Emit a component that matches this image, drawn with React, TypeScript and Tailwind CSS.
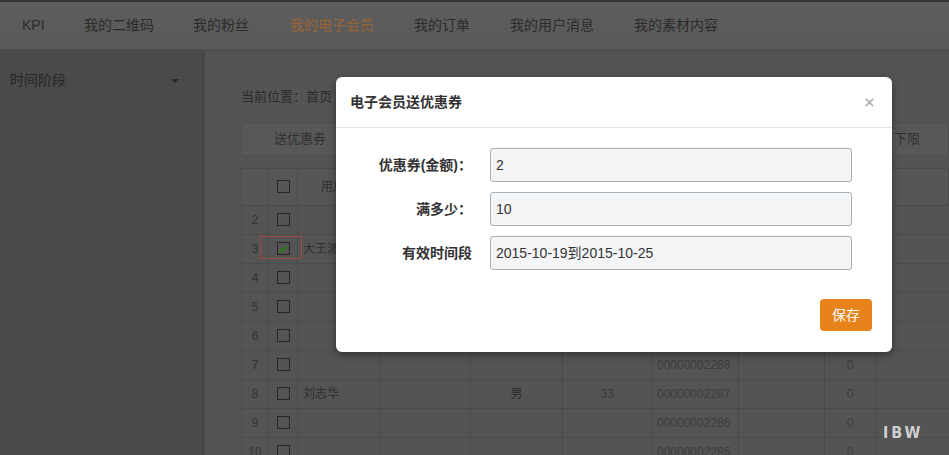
import { X } from 'lucide-react'

const NAV = ['KPI', '我的二维码', '我的粉丝', '我的电子会员', '我的订单', '我的用户消息', '我的素材内容']
const NAV_X = ['w-[62px]', 'w-[109px]', 'w-[97px]', 'w-[124px]', 'w-[96px]', 'w-[124px]', 'w-[120px]']

const COLS = ['w-[27px]', 'w-[29px]', 'w-[83px]', 'w-[90px]', 'w-[92px]', 'w-[90px]', 'w-[86px]', 'w-[86px]', 'w-[51px]', 'flex-1']

interface Row {
  no: number
  name: string
  sex: string
  age: string
  id: string
  count: string
  checked?: boolean
}

const ROWS: Row[] = [
  { no: 2, name: '', sex: '', age: '', id: '00000002292', count: '0' },
  { no: 3, name: '大王派', sex: '', age: '', id: '00000002291', count: '0', checked: true },
  { no: 4, name: '', sex: '', age: '', id: '00000002290', count: '0' },
  { no: 5, name: '', sex: '', age: '', id: '00000002290', count: '0' },
  { no: 6, name: '', sex: '', age: '', id: '00000002289', count: '0' },
  { no: 7, name: '', sex: '', age: '', id: '00000002288', count: '0' },
  { no: 8, name: '刘志华', sex: '男', age: '33', id: '00000002287', count: '0' },
  { no: 9, name: '', sex: '', age: '', id: '00000002286', count: '0' },
  { no: 10, name: '', sex: '', age: '', id: '00000002285', count: '0' },
]

function Box({ checked }: { checked?: boolean }) {
  return (
    <span className="flex h-[13px] w-[13px] items-center justify-center border border-[#262626]">
      {checked && (
        <svg viewBox="0 0 10 10" className="h-[10px] w-[10px]">
          <path d="M1.5 4.8 L4 7.5 L8.5 2.2" fill="none" stroke="#2f7a1c" strokeWidth="2.4" />
        </svg>
      )}
    </span>
  )
}

function Field({ label, value }: { label: string; value: string }) {
  return (
    <div className="flex items-center">
      <label className="w-[138px] pr-[2px] text-right text-[14px] font-bold text-[#333]">{label}</label>
      <div className="ml-[16px] flex h-[34px] w-[362px] items-center rounded-[3px] border border-[#a9b0b6] bg-[#f3f5f7] px-[5px] text-[14px] text-[#333]">
        {value}
      </div>
    </div>
  )
}

export default function App() {
  return (
    <div
      className="relative h-[455px] w-[949px] overflow-hidden bg-[#545454]"
      style={{ fontFamily: '"Liberation Sans", "Noto Sans CJK SC", sans-serif' }}
    >
      {/* top nav */}
      <div className="flex h-[52px] items-center border-t-2 border-b-[3px] border-t-[#333] border-b-[#4e4e4e] bg-gradient-to-b from-[#5e5e5e] to-[#595959] pl-[22px] text-[14px] text-[#2b2b2b]">
        {NAV.map((n, i) => (
          <div key={n} className={`${NAV_X[i]} shrink-0 ${i === 3 ? 'text-[#9a6535]' : ''}`}>
            {n}
          </div>
        ))}
      </div>

      <div className="flex h-[403px]">
        {/* sidebar */}
        <div className="w-[205px] shrink-0 border-r-[3px] border-[#474747] bg-[#4a4a4a]">
          <div className="flex items-center justify-between px-[10px] pt-[18px] text-[14px] text-[#262626]">
            <span>时间阶段</span>
            <span className="mr-[13px] h-0 w-0 border-x-[4px] border-t-[4px] border-x-transparent border-t-[#2a2a2a]" />
          </div>
        </div>

        {/* content */}
        <div className="flex-1 pl-[36px] pt-[35px]">
          <div className="text-[13px] text-[#2b2b2b]">当前位置：首页 &gt; 我的电子会员</div>

          <div className="mt-[16px] flex h-[33px] items-center justify-between border border-[#4f4f4f] bg-[#585858] pl-[32px] pr-[28px] text-[13px] text-[#303030]">
            <span>送优惠券</span>
            <span>下限</span>
          </div>

          <div className="mt-[12px] border-l border-t border-[#4b4b4b] text-[12px] text-[#2b2b2b]">
            <div className="flex h-[37px] border-b border-[#4b4b4b] bg-[#565656]">
              {COLS.map((c, i) => (
                <div key={i} className={`${c} flex shrink-0 items-center justify-center border-r border-[#4b4b4b]`}>
                  {i === 1 && <Box />}
                  {i === 2 && <span className="text-[#2e2e2e]">用户名</span>}
                </div>
              ))}
            </div>
            {ROWS.map((r) => (
              <div key={r.no} className="flex h-[29px] border-b border-[#4b4b4b]">
                <div className={`${COLS[0]} flex shrink-0 items-center justify-center border-r border-[#4b4b4b] text-[#333]`}>{r.no}</div>
                <div className={`${COLS[1]} relative flex shrink-0 items-center justify-center border-r border-[#4b4b4b]`}>
                  <Box checked={r.checked} />
                  {r.checked && <span className="absolute left-[-9px] top-[1px] h-[23px] w-[42px] border border-[#a04848]" />}
                </div>
                <div className={`${COLS[2]} flex shrink-0 items-center border-r border-[#4b4b4b] pl-[5px] text-[#2e2e2e]`}>{r.name}</div>
                <div className={`${COLS[3]} shrink-0 border-r border-[#4b4b4b]`} />
                <div className={`${COLS[4]} flex shrink-0 items-center justify-center border-r border-[#4b4b4b]`}>{r.sex}</div>
                <div className={`${COLS[5]} flex shrink-0 items-center justify-center border-r border-[#4b4b4b] text-[#3a3a3a]`}>{r.age}</div>
                <div className={`${COLS[6]} flex shrink-0 items-center border-r border-[#4b4b4b] pl-[4px] text-[#3d3d3d]`}>{r.id}</div>
                <div className={`${COLS[7]} shrink-0 border-r border-[#4b4b4b]`} />
                <div className={`${COLS[8]} flex shrink-0 items-center justify-center border-r border-[#4b4b4b] text-[#3d3d3d]`}>{r.count}</div>
                <div className="flex-1" />
              </div>
            ))}
          </div>
        </div>
      </div>

      {/* watermark */}
      <div className="absolute left-[883px] top-[421px] text-[16px] font-bold tracking-[3px] text-[#cfcfcf]" style={{ fontFamily: '"DejaVu Sans Condensed", sans-serif' }}>
        IBW
      </div>

      {/* modal */}
      <div className="absolute left-[336px] top-[77px] h-[275px] w-[556px] rounded-[6px] bg-white shadow-[0_3px_9px_rgba(0,0,0,0.4)]">
        <div className="flex h-[51px] items-center justify-between border-b border-[#e5e5e5] pl-[14px] pr-[16px]">
          <span className="text-[14px] font-bold text-[#333]">电子会员送优惠券</span>
          <X className="h-[13px] w-[13px] text-[#a8a8a8]" strokeWidth={3} />
        </div>
        <div className="flex flex-col gap-[10px] pt-[20px]">
          <Field label="优惠券(金额)：" value="2" />
          <Field label="满多少：" value="10" />
          <Field label="有效时间段" value="2015-10-19到2015-10-25" />
        </div>
        <div className="flex justify-end pr-[20px] pt-[29px]">
          <button type="button" className="h-[32px] w-[52px] rounded-[4px] bg-[#e8821b] text-[14px] text-white">
            保存
          </button>
        </div>
      </div>
    </div>
  )
}
